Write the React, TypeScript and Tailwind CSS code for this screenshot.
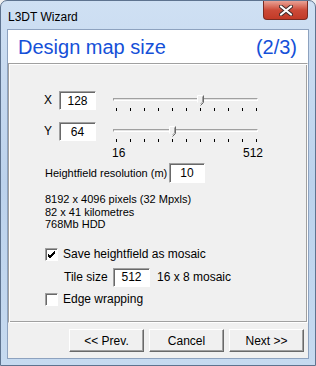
import React from 'react'

const ui = { fontFamily: '"Liberation Sans", Arial, sans-serif' }

function Edit({ value, w, h = 19 }: { value: string; w: number; h?: number }) {
  return (
    <div
      className="bg-white border border-t-[#a0a0a0] border-l-[#a0a0a0] border-b-white border-r-white shadow-[inset_1px_1px_0_#696969] flex items-center justify-center text-[12px] text-black"
      style={{ width: w, height: h }}
    >
      {value}
    </div>
  )
}

function Slider({ pos }: { pos: number }) {
  // pos: 0..1 across the tick range
  const ticks = Array.from({ length: 11 }, (_, i) => i)
  const thumbX = 5 + pos * 140
  return (
    <div className="relative w-[150px] h-[22px]">
      <div className="absolute left-[2px] top-[7px] w-[145px] h-[3px] border-t border-l border-t-[#a0a0a0] border-l-[#a0a0a0] border-b border-r border-b-white border-r-white bg-[#e3e3e3]" />
      {ticks.map(i => (
        <div key={i} className="absolute top-[17px] w-px h-[3px] bg-black" style={{ left: 5 + i * 14 }} />
      ))}
      <svg className="absolute top-[4px]" style={{ left: thumbX - 3 }} width="7" height="11" viewBox="0 0 7 11">
        <path d="M0.5 7.5 V0.5 H6.5 V7.5 L3.5 10.5 Z" fill="#f0f0f0" />
        <path d="M0.5 7.5 V0.5 H5.5" fill="none" stroke="#ffffff" />
        <path d="M6.5 0.5 V7.5 L3.5 10.5" fill="none" stroke="#696969" />
        <path d="M5.5 1.5 V7 L3.5 9" fill="none" stroke="#a0a0a0" />
      </svg>
    </div>
  )
}

function Check({ checked }: { checked?: boolean }) {
  return (
    <div className="w-[13px] h-[13px] bg-white border border-t-[#a0a0a0] border-l-[#a0a0a0] border-b-white border-r-white shadow-[inset_1px_1px_0_#696969] flex items-center justify-center">
      {checked && (
        <svg width="9" height="9" viewBox="0 0 9 9">
          <path d="M1 4 L3 6 L8 1 M1 5 L3 7 L8 2 M1 6 L3 8 L8 3" fill="none" stroke="#000" strokeWidth="1" />
        </svg>
      )}
    </div>
  )
}

function Button({ label }: { label: string }) {
  return (
    <div className="w-[75px] h-[23px] bg-[#f0f0f0] border border-t-white border-l-white border-b-[#696969] border-r-[#696969] shadow-[inset_-1px_-1px_0_#a0a0a0] flex items-center justify-center text-[12px] text-black">
      {label}
    </div>
  )
}

export default function App() {
  return (
    <div className="w-[316px] h-[366px] bg-[#f0f0f0]" style={ui}>
      <div className="w-[316px] h-[366px] rounded-t-[7px] border border-[#5e738f] bg-gradient-to-b from-[#cfe0f3] via-[#bcd2ec] to-[#c6daf0] flex flex-col">
        {/* Title bar */}
        <div className="h-[28px] flex items-start justify-between">
          <div className="pl-[7px] pt-[7px] text-[12px] text-black">L3DT Wizard</div>
          <div className="mr-[7px] w-[45px] h-[19px] rounded-b-[4px] border border-t-0 border-[#7a2b22] bg-gradient-to-b from-[#e8a195] via-[#cc4a38] to-[#c23a27] flex items-center justify-center">
            <svg width="14" height="11" viewBox="0 0 14 11">
              <path d="M2 1.5 L12 9.5 M12 1.5 L2 9.5" stroke="#3c2a2a" strokeWidth="4" strokeLinecap="round" />
              <path d="M2 1.5 L12 9.5 M12 1.5 L2 9.5" stroke="#ffffff" strokeWidth="2.2" strokeLinecap="round" />
            </svg>
          </div>
        </div>

        {/* Client area */}
        <div className="mx-[6px] h-[330px] border border-[#8da2bf] bg-[#f0f0f0] flex flex-col">
          <div className="h-[33px] bg-white flex items-center justify-between pl-[10px] pr-[11px] text-[20px] text-[#1550d8]">
            <span>Design map size</span>
            <span>(2/3)</span>
          </div>

          <div className="h-[260px] border border-t-[#a0a0a0] border-l-[#a0a0a0] border-b-white border-r-white shadow-[inset_1px_1px_0_#ffffff,inset_-1px_-1px_0_#a0a0a0] text-[11px] text-black">
            <div className="pl-[34px] pt-[27px]">
              {/* X row */}
              <div className="flex items-start">
                <span className="w-[15px] leading-[19px] text-[12px] ml-px">X</span>
                <Edit value="128" w={37} />
                <div className="ml-[15px]">
                  <Slider pos={0.6} />
                </div>
              </div>
              {/* Y row */}
              <div className="flex items-start mt-[9px]">
                <span className="w-[15px] leading-[19px] text-[12px] ml-px">Y</span>
                <Edit value="64" w={37} />
                <div className="ml-[15px]">
                  <Slider pos={0.4} />
                </div>
              </div>
              <div className="flex justify-between w-[151px] ml-[69px] mt-[2px] leading-[14px] text-[12px]">
                <span>16</span>
                <span>512</span>
              </div>
              {/* Heightfield */}
              <div className="flex items-center mt-[3px] ml-[2px]">
                <span className="w-[124px] whitespace-nowrap">Heightfield resolution (m)</span>
                <Edit value="10" w={36} h={20} />
              </div>
              <div className="mt-[10px] ml-[2px] leading-[12.5px]">
                <div>8192 x 4096 pixels (32 Mpxls)</div>
                <div>82 x 41 kilometres</div>
                <div>768Mb HDD</div>
              </div>
              {/* Mosaic */}
              <div className="flex items-center gap-[5px] h-[13px] mt-[17px] ml-[2px]">
                <Check checked />
                <span className="text-[12px]">Save heightfield as mosaic</span>
              </div>
              <div className="flex items-center mt-[7px] ml-[21px] text-[12px]">
                <span className="w-[49px]">Tile size</span>
                <Edit value="512" w={37} />
                <span className="ml-[7px]">16 x 8 mosaic</span>
              </div>
              <div className="flex items-center gap-[5px] h-[13px] mt-[6px] ml-[2px]">
                <Check />
                <span className="text-[12px]">Edge wrapping</span>
              </div>
            </div>
          </div>

          <div className="flex justify-end gap-[5px] pt-[6px] pr-[4px]">
            <Button label="<< Prev." />
            <Button label="Cancel" />
            <Button label="Next >>" />
          </div>
        </div>
      </div>
    </div>
  )
}
